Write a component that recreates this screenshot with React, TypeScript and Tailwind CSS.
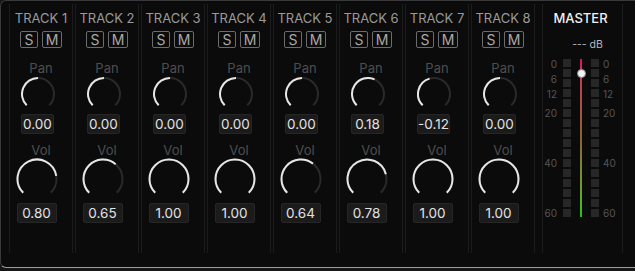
import React from "react";

const tracks = [
  { name: "TRACK 1", pan: 0, vol: 0.8 },
  { name: "TRACK 2", pan: 0, vol: 0.65 },
  { name: "TRACK 3", pan: 0, vol: 1 },
  { name: "TRACK 4", pan: 0, vol: 1 },
  { name: "TRACK 5", pan: 0, vol: 0.64 },
  { name: "TRACK 6", pan: 0.18, vol: 0.78 },
  { name: "TRACK 7", pan: -0.12, vol: 1 },
  { name: "TRACK 8", pan: 0, vol: 1 },
];

function Knob({ size, r, value, min, max }: { size: number; r: number; value: number; min: number; max: number }) {
  const c = size / 2;
  const start = -135;
  const end = 135;
  const ang = start + ((value - min) / (max - min)) * 270;
  const pt = (a: number) => [c + r * Math.sin((a * Math.PI) / 180), c - r * Math.cos((a * Math.PI) / 180)];
  const arc = (a0: number, a1: number) => {
    const [x0, y0] = pt(a0);
    const [x1, y1] = pt(a1);
    const large = a1 - a0 > 180 ? 1 : 0;
    return `M${x0} ${y0} A${r} ${r} 0 ${large} 1 ${x1} ${y1}`;
  };
  return (
    <svg width={size} height={size} viewBox={`0 0 ${size} ${size}`}>
      <path d={arc(start, end)} fill="none" stroke="#2a2a2a" strokeWidth={2} />
      {ang > start + 0.5 && <path d={arc(start, ang)} fill="none" stroke="#e6e6e6" strokeWidth={2} />}
    </svg>
  );
}

function Strip({ name, pan, vol }: { name: string; pan: number; vol: number }) {
  return (
    <div className="w-[64px] h-[249px] shrink-0 border-x border-[#1c1c1c] flex flex-col items-center pt-[6px]">
      <div className="h-[16px] leading-[16px] text-[13px] font-normal text-[#9a9a9a] whitespace-nowrap">{name}</div>
      <div className="mt-[5px] flex gap-[4px]">
        <div className="w-[18px] h-[17px] border-[1.5px] border-[#6c6c6c] rounded-[2px] flex items-center justify-center text-[14px] leading-none text-[#a8a8a8]">S</div>
        <div className="w-[20px] h-[17px] border-[1.5px] border-[#6c6c6c] rounded-[2px] flex items-center justify-center text-[14px] leading-none text-[#a8a8a8]">M</div>
      </div>
      <div className="mt-[12px] h-[16px] leading-[16px] text-[13px] text-[#4e4e4e]">Pan</div>
      <div className="mt-[1px] mr-[7px] h-[34px]">
        <Knob size={34} r={16} value={pan} min={-1} max={1} />
      </div>
      <div className="mt-[3px] mr-[7px] w-[33px] h-[20px] bg-[#1b1b1b] border border-[#262626] rounded-[2px] flex items-center justify-center text-[13.5px] text-[#e2e2e2]">
        {pan.toFixed(2)}
      </div>
      <div className="mt-[8px] h-[16px] leading-[16px] text-[13px] text-[#4e4e4e]">Vol</div>
      <div className="mr-[9px] h-[42px]">
        <Knob size={42} r={19.5} value={vol} min={0} max={1} />
      </div>
      <div className="mt-[3px] mr-[9px] w-[40px] h-[20px] bg-[#1b1b1b] border border-[#262626] rounded-[2px] flex items-center justify-center text-[13.5px] text-[#e2e2e2]">
        {vol.toFixed(2)}
      </div>
    </div>
  );
}

const labels = [
  { t: "0", top: 0 },
  { t: "6", top: 15 },
  { t: "12", top: 30 },
  { t: "20", top: 49 },
  { t: "40", top: 99 },
  { t: "60", top: 149 },
];

function Segments() {
  return (
    <div className="flex flex-col gap-[2px] w-[8px]">
      {Array.from({ length: 16 }).map((_, i) => (
        <div key={i} className="w-[8px] h-[8px] bg-[#272727]" />
      ))}
    </div>
  );
}

function Master() {
  return (
    <div className="ml-[5px] w-[81px] h-[249px] shrink-0 border-x border-[#1c1c1c] flex flex-col items-center pt-[6px]">
      <div className="h-[16px] leading-[16px] text-[13px] font-medium text-[#f0f0f0] whitespace-nowrap mr-[4px]">MASTER</div>
      <div className="mt-[13px] h-[12px] leading-[12px] text-[10.5px] text-[#b8b8b8] pl-[10px]">--- dB</div>
      <div className="mt-[8px] flex w-full pl-[1px]">
        <div className="relative w-[13px] h-[158px]">
          {labels.map((l) => (
            <div key={l.t} className="absolute right-0 text-[10px] leading-[10px] text-[#555555]" style={{ top: l.top }}>
              {l.t}
            </div>
          ))}
        </div>
        <div className="ml-[6px]">
          <Segments />
        </div>
        <div className="relative w-[20px] h-[158px] flex justify-center">
          <div className="w-[2px] h-[158px] bg-linear-to-b from-[#d6145c] via-[#8a6236] to-[#16c416]" />
          <div className="absolute left-[5.5px] top-[9.5px] w-[9px] h-[9px] rounded-full bg-[#f2f2f2] border border-[#8a8a8a]" />
        </div>
        <Segments />
        <div className="relative ml-[4px] w-[15px] h-[158px]">
          {labels.map((l) => (
            <div key={l.t} className="absolute left-0 text-[10px] leading-[10px] text-[#555555]" style={{ top: l.top }}>
              {l.t}
            </div>
          ))}
        </div>
      </div>
    </div>
  );
}

export default function App() {
  return (
    <div className="w-[635px] h-[271px] bg-[#161616] overflow-hidden" style={{ fontFamily: "Inter, 'Liberation Sans', sans-serif" }}>
      <div className="h-[268px] bg-[#0b0b0b] border-l border-t border-b border-[#3a3a3a] border-b-[#9c9c9c] rounded-l-[6px] pl-[8px] pt-[3px]">
        <div className="flex gap-[2px]">
          {tracks.map((t) => (
            <Strip key={t.name} {...t} />
          ))}
          <Master />
        </div>
      </div>
    </div>
  );
}
